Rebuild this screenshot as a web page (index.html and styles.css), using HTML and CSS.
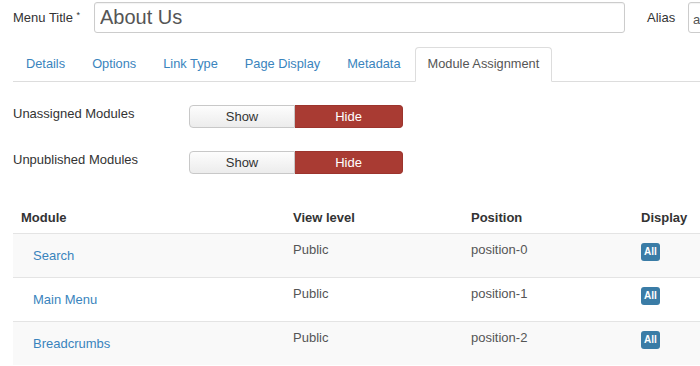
FILE: index.html
```html
<!DOCTYPE html>
<html lang="en">
<head>
    <meta charset="UTF-8">
    <meta name="viewport" content="width=device-width, initial-scale=1.0">
    <title>Edit Menu Item</title>
    <link rel="stylesheet" href="styles.css">
</head>
<body>
    <div class="title-row">
        <label class="title-label" for="menu-title">Menu Title <span class="star">*</span></label>
        <input type="text" id="menu-title" class="title-input" value="About Us">
        <label class="alias-label" for="alias">Alias</label>
        <input type="text" id="alias" class="alias-input" value="about-us">
    </div>

    <ul class="nav-tabs">
        <li><a href="#">Details</a></li>
        <li><a href="#">Options</a></li>
        <li><a href="#">Link Type</a></li>
        <li><a href="#">Page Display</a></li>
        <li><a href="#">Metadata</a></li>
        <li class="active"><a href="#">Module Assignment</a></li>
    </ul>

    <div class="control-group">
        <div class="control-label">Unassigned Modules</div>
        <div class="btn-group">
            <button class="btn">Show</button>
            <button class="btn btn-danger">Hide</button>
        </div>
    </div>

    <div class="control-group">
        <div class="control-label">Unpublished Modules</div>
        <div class="btn-group">
            <button class="btn">Show</button>
            <button class="btn btn-danger">Hide</button>
        </div>
    </div>

    <table class="module-table">
        <colgroup>
            <col class="col-module">
            <col class="col-access">
            <col class="col-position">
            <col class="col-display">
        </colgroup>
        <thead>
            <tr>
                <th>Module</th>
                <th>View level</th>
                <th>Position</th>
                <th>Display</th>
            </tr>
        </thead>
        <tbody>
            <tr>
                <td class="module-name"><a href="#">Search</a></td>
                <td>Public</td>
                <td>position-0</td>
                <td class="display"><span class="badge">All</span></td>
            </tr>
            <tr>
                <td class="module-name"><a href="#">Main Menu</a></td>
                <td>Public</td>
                <td>position-1</td>
                <td class="display"><span class="badge">All</span></td>
            </tr>
            <tr>
                <td class="module-name"><a href="#">Breadcrumbs</a></td>
                <td>Public</td>
                <td>position-2</td>
                <td class="display"><span class="badge">All</span></td>
            </tr>
        </tbody>
    </table>
</body>
</html>
```

FILE: styles.css
```css
body {
    font-family: 'Liberation Sans', Arial, sans-serif;
    font-size: 13px;
    line-height: 18px;
    color: #333;
    margin: 0;
    padding: 0 0 0 13px;
    background-color: #fff;
    overflow: hidden;
    width: 760px;
}

/* title row */
.title-row {
    display: flex;
    align-items: center;
    padding-top: 2px;
    height: 31px;
}

.title-row > * {
    flex-shrink: 0;
}

.title-label {
    width: 81px;
    color: #333;
}

.star {
    font-size: 9px;
    vertical-align: top;
    line-height: 12px;
}

.title-input,
.alias-input {
    box-sizing: border-box;
    height: 31px;
    border: 1px solid #ccc;
    border-radius: 3px;
    font-family: inherit;
    color: #555;
    box-shadow: inset 0 1px 1px rgba(0,0,0,0.05);
}

.title-input {
    width: 531px;
    font-size: 20px;
    padding: 0 5px;
}

.alias-label {
    margin-left: 22px;
    width: 41px;
}

.alias-input {
    width: 120px;
    font-size: 13px;
    padding: 4px 4px 0;
}

/* tabs */
.nav-tabs {
    display: flex;
    list-style: none;
    margin: 14px 0 0;
    padding: 0;
    border-bottom: 1px solid #ddd;
    font-size: 12.8px;
}

.nav-tabs li {
    margin-bottom: -1px;
}

.nav-tabs a {
    display: block;
    padding: 7px 12px 8px;
    margin-right: 1px;
    border: 1px solid transparent;
    border-radius: 4px 4px 0 0;
    color: #3a84bd;
    text-decoration: none;
}

.nav-tabs .active a {
    color: #555;
    background-color: #fff;
    border-color: #ddd #ddd transparent;
}

/* show / hide switches */
.control-group {
    display: flex;
    align-items: center;
    margin-top: 23px;
}

.control-group:first-of-type {
    margin-top: 24px;
}

.control-label {
    width: 176px;
    flex-shrink: 0;
    margin-top: -5px;
}

.btn-group {
    display: flex;
}

.btn {
    box-sizing: border-box;
    height: 23px;
    width: 106px;
    font-family: inherit;
    font-size: 13px;
    color: #333;
    border: 1px solid #c8c8c8;
    border-radius: 4px 0 0 4px;
    background: linear-gradient(#fdfdfd, #ececec);
    padding: 0;
    cursor: pointer;
}

.btn-danger {
    width: 108px;
    color: #fff;
    background: #a93b33;
    border-color: #9c342d;
    border-radius: 0 4px 4px 0;
    border-left: none;
}

/* module table */
.module-table {
    border-collapse: collapse;
    table-layout: fixed;
    width: 720px;
    margin-top: 25px;
}

.col-module { width: 272px; }
.col-access { width: 178px; }
.col-position { width: 170px; }
.col-display { width: 100px; }

.module-table th {
    text-align: left;
    font-weight: bold;
    color: #333;
    padding: 10px 8px 6px;
    border-bottom: 1px solid #e4e4e4;
}

.module-table td {
    vertical-align: top;
    color: #555;
    padding: 7px 8px 18px;
    border-bottom: 1px solid #e4e4e4;
}

.module-table tbody tr:last-child td {
    border-bottom: none;
}

.module-table tbody tr:nth-child(odd) td {
    background-color: #f9f9f9;
}

.module-table td.module-name {
    padding: 13px 8px 12px 20px;
}

.module-table td.display {
    padding: 9px 8px 16px;
}

.module-name a {
    color: #3a84bd;
    text-decoration: none;
}

.badge {
    display: inline-block;
    vertical-align: top;
    height: 18px;
    line-height: 18px;
    padding: 0 3px;
    font-size: 10px;
    font-weight: bold;
    color: #fff;
    background-color: #3a7ca6;
    border-radius: 3px;
}
```
